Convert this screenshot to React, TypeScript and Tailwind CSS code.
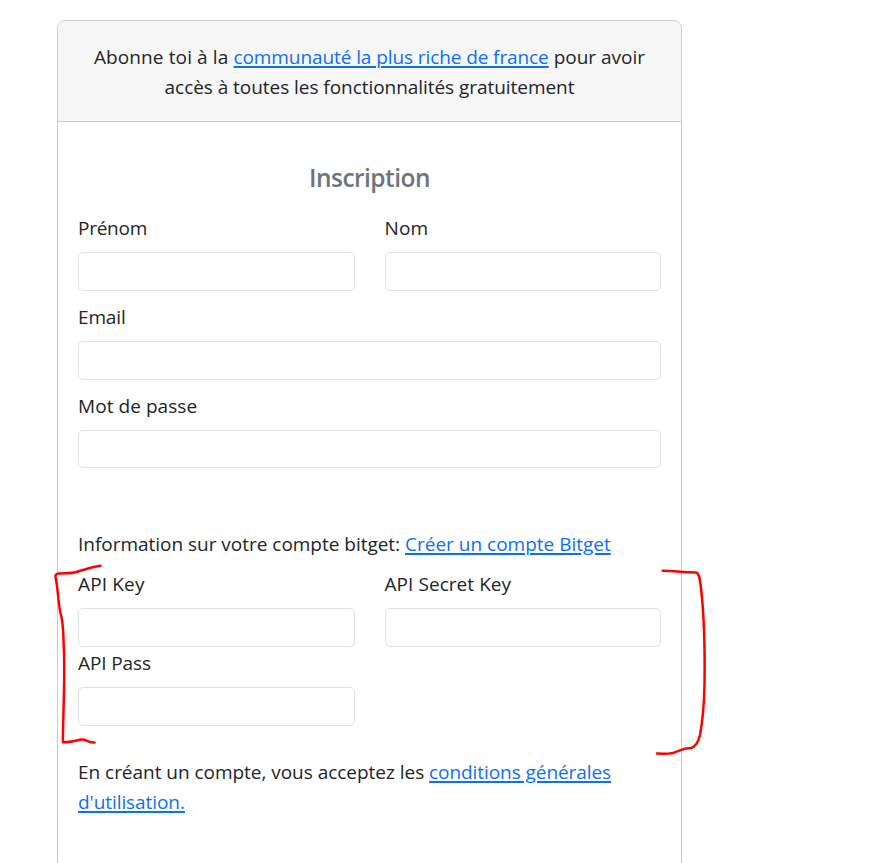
import type { ReactNode } from "react";

function Field({ id, label, type = "text", labelClass = "", inputClass = "h-[39px]" }: { id: string; label: string; type?: string; labelClass?: string; inputClass?: string }) {
  return (
    <div>
      <label htmlFor={id} className={`block h-[30px] ${labelClass}`}>{label}</label>
      <input id={id} type={type} className={`mt-[9px] block w-full rounded-[5px] border border-[#dee2e6] bg-white px-3 outline-none ${inputClass}`} />
    </div>
  );
}

function Link({ children, className = "" }: { children: ReactNode; className?: string }) {
  return (
    <a href="#" className={`text-[#0d6efd] underline decoration-2 underline-offset-[2px] ${className}`}>{children}</a>
  );
}

export default function App() {
  return (
    <div className="relative h-[863px] w-[879px] overflow-hidden bg-white font-['Open_Sans','Noto_Sans',sans-serif] text-[19px] leading-[30px] text-[#212529]">
      <main className="ml-[57px] mt-[20px] h-[900px] w-[625px] rounded-[8px] border border-[#cccccc]">
        <header className="h-[101px] rounded-t-[7px] border-b border-[#cccccc] bg-[#f7f7f7] pt-[21px] text-center whitespace-nowrap">
          <p><span className="tracking-[0.12px]">Abonne toi à la </span><Link className="tracking-[-0.09px]">communauté la plus riche de france</Link> pour avoir</p>
          <p className="tracking-[-0.05px]">accès à toutes les fonctionnalités gratuitement</p>
        </header>
        <form className="px-[20px] pt-[41px]">
          <h1 className="h-[30px] text-center text-[24.5px] font-semibold tracking-[-0.55px] text-[#6c757d]">Inscription</h1>
          <div className="mt-[20px] grid grid-cols-2 gap-x-[30px]">
            <Field id="prenom" label="Prénom" labelClass="tracking-[-0.25px]" />
            <Field id="nom" label="Nom" labelClass="tracking-[0.15px]" />
          </div>
          <div className="mt-[11px]"><Field id="email" label="Email" type="email" labelClass="tracking-[-0.15px]" /></div>
          <div className="mt-[11px]"><Field id="password" label="Mot de passe" type="password" labelClass="tracking-[0.06px]" inputClass="h-[38px]" /></div>
          <p className="mt-[61px] whitespace-nowrap"><span className="tracking-[-0.02px]">Information sur votre compte bitget: </span><Link>Créer un compte Bitget</Link></p>
          <div className="mt-[10px] grid grid-cols-2 gap-x-[30px] gap-y-px">
            <Field id="api-key" label="API Key" labelClass="tracking-[0.15px]" />
            <Field id="api-secret" label="API Secret Key" labelClass="tracking-[0.06px]" />
            <Field id="api-pass" label="API Pass" type="password" labelClass="tracking-[-0.12px]" />
          </div>
          <p className="mt-[31px] whitespace-nowrap"><span className="tracking-[-0.03px]">En créant un compte, vous acceptez les </span><Link className="tracking-[-0.07px]">conditions générales<br />d'utilisation.</Link></p>
        </form>
      </main>
      <svg className="pointer-events-none absolute inset-0" width="879" height="863" viewBox="0 0 879 863" fill="none" stroke="#ff0000" strokeWidth="2.5" strokeLinecap="round" strokeLinejoin="round">
        <path d="M100.5 565.8C91 567 86 569.5 78 571.5C71 574 66 573 59 573.5C56 574 55 575 55.5 577C58 588 58 602 60.5 613C64 625 63 635 64 652C65 684 63 714 62.9 742.3C69 742.5 75 741 81 739.5C87 739 87 742.5 94.5 742.5" />
        <path d="M662.7 570.7C675 571 684 572.5 696 572.5C699 573 700 579 701 588C705 623 705 653 704.5 685C704 711 702 724 700 735C698 743 695 747 691 748C682 748 681 751 676 751.7C672 754.5 666 753.5 657 753.6" />
      </svg>
    </div>
  );
}
